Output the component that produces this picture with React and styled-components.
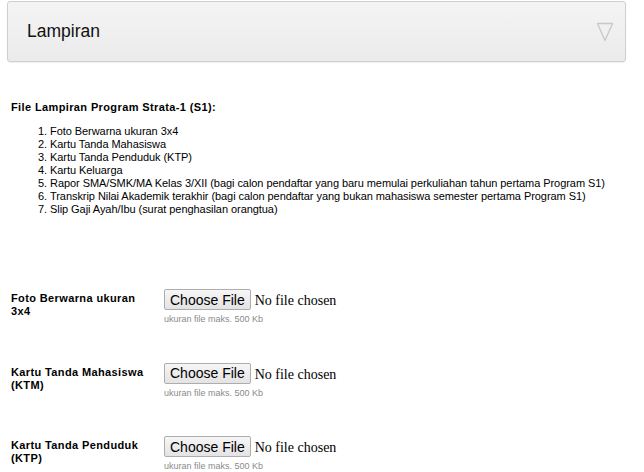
import styled, { createGlobalStyle } from 'styled-components';

const GlobalStyle = createGlobalStyle`
  html, body {
    margin: 0;
    padding: 0;
    background: #fff;
  }
  body {
    font-family: "Liberation Sans", Arial, sans-serif;
    color: #000;
  }
`;

const Page = styled.div`
  width: 644px;
  padding: 1px 0 0;
`;

const Accordion = styled.div`
  margin: 0 18px 0 7px;
  height: 59px;
  border: 1px solid #cfcfcf;
  border-radius: 3px;
  background: linear-gradient(#f4f4f4, #ebebeb);
  box-shadow: 0 1px 1px rgba(0, 0, 0, 0.06);
  display: flex;
  align-items: center;
  justify-content: space-between;
  padding: 0 11px 0 19px;
`;

const AccordionTitle = styled.span`
  font-size: 17.5px;
  color: #111;
`;

const Content = styled.div`
  padding: 39px 0 0 11px;
`;

const Heading = styled.div`
  font-size: 11px;
  line-height: 13px;
  font-weight: bold;
  letter-spacing: 0.38px;
`;

const List = styled.ol`
  margin: 11px 0 0;
  padding-left: 39px;
  font-size: 11px;
  line-height: 13px;
  letter-spacing: -0.06px;
`;

const Form = styled.div`
  margin-top: 73px;
  display: flex;
  flex-direction: column;
  gap: 37.5px;
`;

const Row = styled.div`
  display: grid;
  grid-template-columns: 153px 1fr;
  align-items: start;
`;

const Label = styled.label`
  font-size: 11px;
  line-height: 13px;
  font-weight: bold;
  letter-spacing: 0.38px;
  padding-top: 3px;
  width: 140px;
`;

const Field = styled.div`
  display: flex;
  flex-direction: column;
`;

const FileInput = styled.input`
  font-family: "Liberation Serif", "Times New Roman", serif;
  font-size: 14px;
  color: #000;
  height: 21px;

  &::file-selector-button {
    font-family: "Liberation Sans", Arial, sans-serif;
    font-size: 14px;
    height: 21px;
    padding: 0 5px;
    margin-right: 4px;
    border: 1px solid #adadad;
    border-radius: 2px;
    background: linear-gradient(#f6f6f6, #e3e3e3);
    color: #000;
  }
`;

const Hint = styled.small`
  margin-top: 4px;
  font-size: 9px;
  line-height: 11px;
  color: #8a8a8a;
`;

const Arrow = () => (
  <svg width="18" height="20" viewBox="0 0 18 20">
    <path d="M1.5 1.5 H16.5 L9 18.5 Z" fill="none" stroke="#c8c8c8" strokeWidth="1.3" strokeLinejoin="round" />
  </svg>
);

const documents = [
  'Foto Berwarna ukuran 3x4',
  'Kartu Tanda Mahasiswa',
  'Kartu Tanda Penduduk (KTP)',
  'Kartu Keluarga',
  'Rapor SMA/SMK/MA Kelas 3/XII (bagi calon pendaftar yang baru memulai perkuliahan tahun pertama Program S1)',
  'Transkrip Nilai Akademik terakhir (bagi calon pendaftar yang bukan mahasiswa semester pertama Program S1)',
  'Slip Gaji Ayah/Ibu (surat penghasilan orangtua)',
];

const uploads = [
  { id: 'foto', label: 'Foto Berwarna ukuran 3x4' },
  { id: 'ktm', label: 'Kartu Tanda Mahasiswa (KTM)' },
  { id: 'ktp', label: 'Kartu Tanda Penduduk (KTP)' },
];

export default function App() {
  return (
    <Page>
      <GlobalStyle />
      <Accordion>
        <AccordionTitle>Lampiran</AccordionTitle>
        <Arrow />
      </Accordion>

      <Content>
        <Heading>File Lampiran Program Strata-1 (S1):</Heading>
        <List>
          {documents.map((doc) => (
            <li key={doc}>{doc}</li>
          ))}
        </List>

        <Form>
          {uploads.map((u) => (
            <Row key={u.id}>
              <Label htmlFor={u.id}>{u.label}</Label>
              <Field>
                <FileInput type="file" id={u.id} />
                <Hint>ukuran file maks. 500 Kb</Hint>
              </Field>
            </Row>
          ))}
        </Form>
      </Content>
    </Page>
  );
}
